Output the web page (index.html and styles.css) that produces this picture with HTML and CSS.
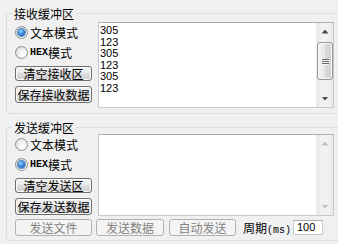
FILE: index.html
```html
<!DOCTYPE html>
<html>
	<head>
		<meta charset="utf-8">
		<title>串口缓冲区</title>
		<link rel="stylesheet" href="styles.css">
	</head>
	<body>
		<div class="panel">
			<!-- 接收 -->
			<fieldset class="group group-rx">
				<legend>接收缓冲区</legend>
				<div class="group-body">
					<div class="side">
						<label class="opt"><span class="radio checked"></span>文本模式</label>
						<label class="opt opt-second"><span class="radio"></span><span class="hex">HEX</span>模式</label>
						<button class="btn btn-clear">清空接收区</button>
						<button class="btn btn-save">保存接收数据</button>
					</div>
					<div class="textbox textbox-rx">
						<div class="text">305<br>123<br>305<br>123<br>305<br>123</div>
						<div class="vscroll">
							<div class="arrow"><span class="tri up"></span></div>
							<div class="track"><div class="thumb"><i></i><i></i><i></i></div></div>
							<div class="arrow"><span class="tri down"></span></div>
						</div>
					</div>
				</div>
			</fieldset>

			<!-- 发送 -->
			<fieldset class="group group-tx">
				<legend>发送缓冲区</legend>
				<div class="group-body">
					<div class="side">
						<label class="opt"><span class="radio"></span>文本模式</label>
						<label class="opt opt-second"><span class="radio checked"></span><span class="hex">HEX</span>模式</label>
						<button class="btn btn-clear">清空发送区</button>
						<button class="btn btn-save">保存发送数据</button>
					</div>
					<div class="textbox textbox-tx">
						<div class="text"></div>
						<div class="vscroll off">
							<div class="arrow"><span class="tri up"></span></div>
							<div class="track"></div>
							<div class="arrow"><span class="tri down"></span></div>
						</div>
					</div>
				</div>
				<div class="actions">
					<button class="btn btn-off btn-file" disabled>发送文件</button>
					<button class="btn btn-off btn-data" disabled>发送数据</button>
					<button class="btn btn-off btn-auto" disabled>自动发送</button>
					<span class="period">周期<span class="half">(ms):</span></span>
					<div class="period-input">100</div>
				</div>
			</fieldset>
		</div>
	</body>
</html>
```

FILE: styles.css
```css
*{
	margin: 0;
	padding: 0;
	box-sizing: border-box;
}
body{
	width: 338px;
	height: 244px;
	overflow: hidden;
	background-color: #f0f0f0;
	font: 12px "Noto Sans CJK SC", sans-serif;
	color: #000;
}
.panel{
	padding: 7px 0 0 6px;
}
.group{
	width: 336px;
	border: 1px solid #d5dfe5;
	border-radius: 3px;
	padding: 0 7px 0 5px;
}
.group legend{
	height: 13px;
	line-height: 13px;
	padding: 0 2px;
}
.group-rx{
	padding-top: 2px;
	padding-bottom: 5px;
}
.group-tx{
	margin-top: 7px;
	padding-bottom: 4px;
}
.group-body{
	display: flex;
	gap: 6px;
}
.side{
	width: 80px;
	padding: 3px 0 0 3px;
	display: flex;
	flex-direction: column;
	align-items: flex-start;
}
.opt{
	height: 15px;
	line-height: 15px;
	display: flex;
	align-items: center;
	white-space: nowrap;
}
.opt-second{
	margin-top: 5px;
}
.hex{
	font: 10px "Liberation Mono", monospace;
	font-weight: bold;
}
.radio{
	width: 13px;
	height: 13px;
	margin-right: 2px;
	border-radius: 50%;
	border: 1px solid #8f8f8f;
	background: radial-gradient(circle at 65% 70%, #ffffff 0, #f4f4f4 40%, #d2d2d2 100%);
	display: flex;
	align-items: center;
	justify-content: center;
}
.radio.checked::after{
	content: "";
	width: 7px;
	height: 7px;
	border-radius: 50%;
	background: radial-gradient(circle at 40% 35%, #a8d8ff 0, #4a9ae8 35%, #1a5cb0 80%);
	box-shadow: 0 0 0 1px #5a86bd;
}
.btn{
	width: 77px;
	font: 12px "Noto Sans CJK SC", sans-serif;
	color: #000;
	border: 1px solid #707070;
	border-radius: 3px;
	background: linear-gradient(#f2f2f2 0%, #ebebeb 50%, #dddddd 50%, #cfcfcf 100%);
	box-shadow: inset 0 0 0 1px #fbfbfb;
	display: flex;
	align-items: center;
	justify-content: center;
	white-space: nowrap;
}
.btn-clear{
	height: 15px;
	margin-top: 6px;
}
.btn-save{
	height: 17px;
	margin-top: 5px;
}
.btn-off{
	height: 17px;
	color: #838383;
	border-color: #adb2b5;
	background: #f4f4f4;
	box-shadow: none;
}
.textbox{
	flex: 1;
	display: flex;
	background-color: #fff;
	border: 1px solid #c6cad0;
	border-top-color: #abadb3;
}
.textbox-rx{
	height: 86px;
}
.textbox-tx{
	height: 82px;
}
.text{
	flex: 1;
	padding: 2px 0 0 1px;
	font: 11px/11.6px "Liberation Sans", sans-serif;
}
.vscroll{
	width: 17px;
	display: flex;
	flex-direction: column;
	background: linear-gradient(to right, #e6e6e6, #f2f2f2 30%, #f2f2f2 70%, #e8e8e8);
	border-left: 1px solid #efefef;
}
.arrow{
	height: 17px;
	display: flex;
	align-items: center;
	justify-content: center;
}
.tri{
	width: 7px;
	height: 4px;
	background-color: #4d4d4d;
}
.tri.up{
	clip-path: polygon(50% 0, 100% 100%, 0 100%);
}
.tri.down{
	clip-path: polygon(0 0, 100% 0, 50% 100%);
}
.off .tri{
	background-color: #bfbfbf;
}
.track{
	flex: 1;
	padding: 2px 0 0 0;
}
.thumb{
	height: 38px;
	border: 1px solid #959595;
	border-radius: 3px;
	background: linear-gradient(to right, #f3f3f3, #e8e8e8 50%, #d9d9d9 50%, #d2d2d2);
	box-shadow: inset 0 0 0 1px #fafafa;
	display: flex;
	flex-direction: column;
	align-items: center;
	justify-content: center;
	gap: 1px;
}
.thumb i{
	width: 7px;
	height: 1px;
	background-color: #6a6a6a;
	box-shadow: 0 1px 0 #f7f7f7;
}
.actions{
	height: 17px;
	margin-top: 3px;
	padding-left: 3px;
	display: flex;
	align-items: center;
}
.btn-data{
	width: 68px;
	margin-left: 4px;
}
.btn-auto{
	width: 67px;
	margin-left: 5px;
}
.period{
	width: 50px;
	margin-left: 7px;
	white-space: nowrap;
}
.half{
	font: 10px "Liberation Mono", monospace;
}
.period-input{
	width: 30px;
	height: 15px;
	padding-left: 3px;
	background-color: #fff;
	border: 1px solid #c6cad0;
	border-top-color: #abadb3;
	font: 11px/13px "Liberation Sans", sans-serif;
}
```
